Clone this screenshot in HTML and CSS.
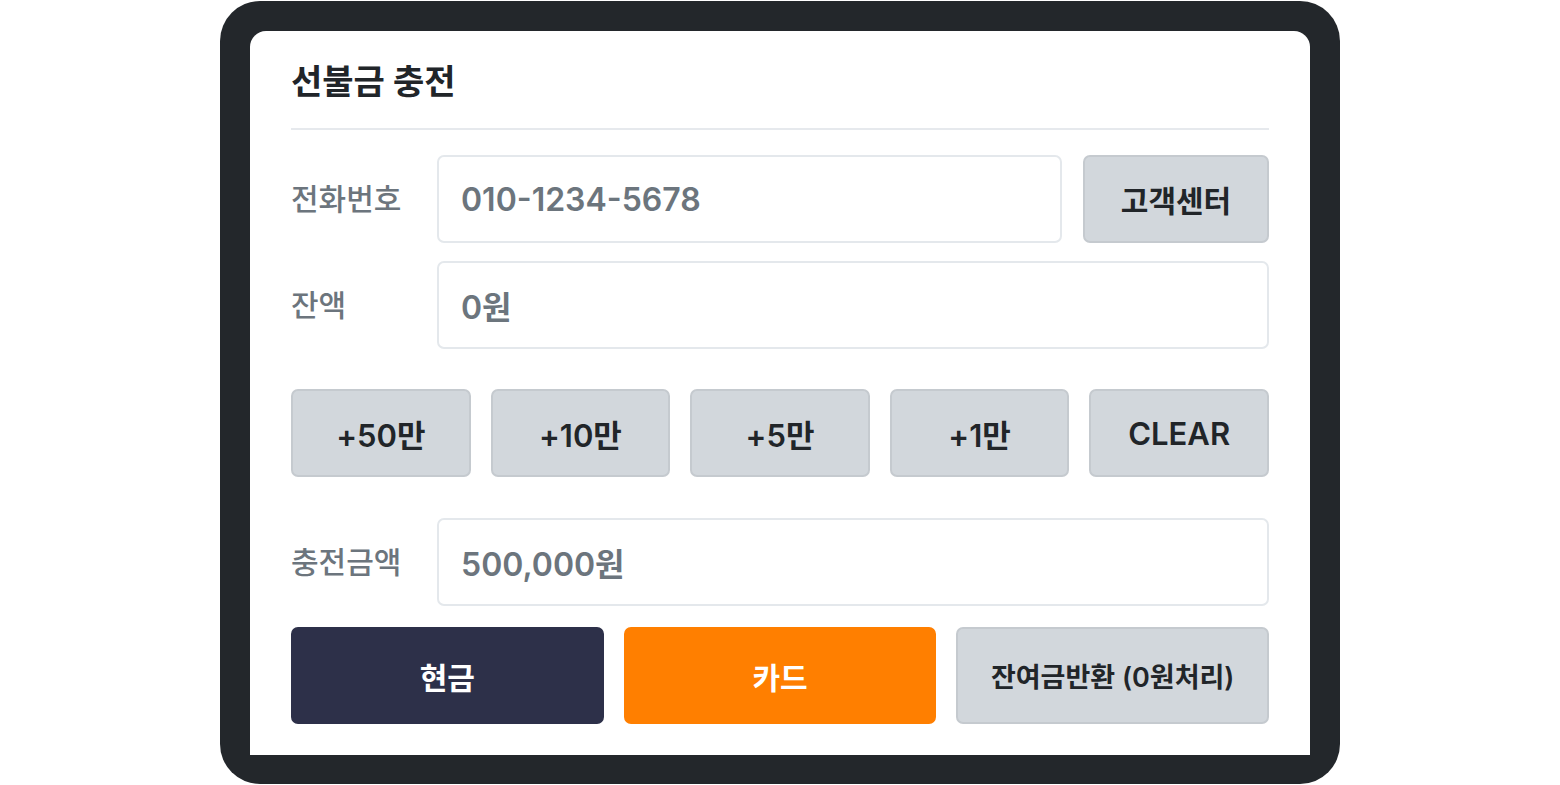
FILE: index.html
```html
<!DOCTYPE html>
<html lang="ko">
<head>
<meta charset="utf-8">
<title>선불금 충전</title>
<link rel="stylesheet" href="styles.css">
</head>
<body>
<div class="device">
  <div class="screen">
    <header class="header">
      <h1 class="title">선불금 충전</h1>
    </header>
    <div class="form">
      <div class="row row-phone">
        <label class="label">전화번호</label>
        <div class="field-group">
          <input class="field" type="text" value="010-1234-5678" readonly>
          <button class="btn btn-gray btn-center">고객센터</button>
        </div>
      </div>
      <div class="row row-balance">
        <label class="label">잔액</label>
        <input class="field" type="text" value="0원" readonly>
      </div>
      <div class="presets">
        <button class="btn btn-gray btn-preset">+50만</button>
        <button class="btn btn-gray btn-preset">+10만</button>
        <button class="btn btn-gray btn-preset">+5만</button>
        <button class="btn btn-gray btn-preset">+1만</button>
        <button class="btn btn-gray btn-preset">CLEAR</button>
      </div>
      <div class="row row-amount">
        <label class="label">충전금액</label>
        <input class="field" type="text" value="500,000원" readonly>
      </div>
      <div class="actions">
        <button class="btn btn-action btn-cash">현금</button>
        <button class="btn btn-action btn-card">카드</button>
        <button class="btn btn-action btn-gray btn-refund">잔여금반환 (0원처리)</button>
      </div>
    </div>
  </div>
</div>
</body>
</html>
```

FILE: styles.css
```css
* {
  box-sizing: border-box;
}

html, body {
  margin: 0;
  padding: 0;
  background: #ffffff;
}

body {
  font-family: Inter, "Noto Sans CJK KR", "Noto Sans", sans-serif;
  color: #212529;
  padding-top: 1px;
}

.device {
  width: 1120px;
  height: 783px;
  margin: 0 auto;
  background: #23272b;
  border-radius: 40px;
  padding: 30px 30px 29px;
  display: flex;
}

.screen {
  flex: 1;
  background: #ffffff;
  border-radius: 16px 16px 0 0;
  padding: 0 41px;
  display: flex;
  flex-direction: column;
}

.header {
  padding-top: 31px;
  padding-bottom: 26px;
  border-bottom: 2px solid #e6e9ed;
}

.title {
  margin: 0;
  font-size: 34px;
  line-height: 40px;
  font-weight: 700;
  color: #212529;
}

.form {
  margin-top: 25px;
  display: flex;
  flex-direction: column;
}

.row {
  display: grid;
  grid-template-columns: 146px 1fr;
  align-items: center;
  height: 88px;
}

.field-group {
  display: grid;
  grid-template-columns: 1fr 186px;
  column-gap: 21px;
  align-items: center;
}

.row-balance {
  margin-top: 18px;
}

.label {
  font-size: 30px;
  font-weight: 500;
  color: #6c757d;
  line-height: 1;
}

.field {
  height: 88px;
  width: 100%;
  border: 2px solid #e4e8ec;
  border-radius: 7px;
  background: #ffffff;
  padding: 0 22px;
  font-family: Inter, "Noto Sans CJK KR", sans-serif;
  font-size: 32px;
  font-weight: 600;
  color: #6c757d;
  outline: none;
}

.btn {
  font-family: Inter, "Noto Sans CJK KR", sans-serif;
  border-radius: 7px;
  cursor: pointer;
  padding: 0;
}

.btn-gray {
  background: #d2d7dc;
  border: 2px solid #c5cacf;
  color: #212529;
}

.btn-center {
  height: 88px;
  font-size: 30px;
  font-weight: 600;
}

.presets {
  margin-top: 40px;
  display: grid;
  grid-template-columns: repeat(5, 1fr);
  column-gap: 20px;
  height: 88px;
}

.btn-preset {
  height: 88px;
  font-size: 31px;
  font-weight: 600;
}

.row-amount {
  margin-top: 41px;
}

.actions {
  margin-top: 21px;
  display: grid;
  grid-template-columns: repeat(3, 1fr);
  column-gap: 20px;
}

.btn-action {
  height: 97px;
  font-weight: 700;
  font-size: 30px;
}

.btn-cash {
  background: #2d3049;
  border: 2px solid #2d3049;
  color: #ffffff;
}

.btn-card {
  background: #ff7f00;
  border: 2px solid #ff7f00;
  color: #ffffff;
}

.btn-refund {
  font-size: 27px;
  font-weight: 600;
}
```
